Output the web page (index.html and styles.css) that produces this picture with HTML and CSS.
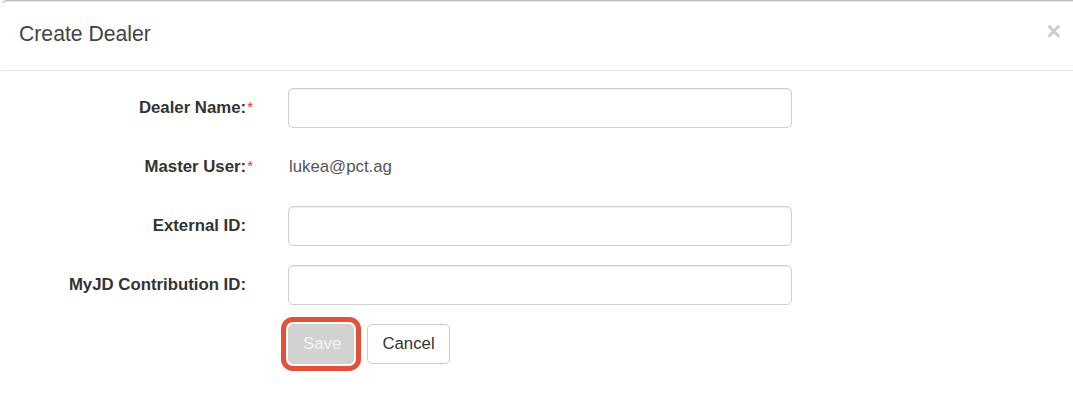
FILE: index.html
```html
<!DOCTYPE html>
<html lang="en">
<head>
<meta charset="utf-8">
<title>Create Dealer</title>
<link rel="stylesheet" href="styles.css">
</head>
<body>
<div class="modal">
  <div class="modal-header">
    <h4 class="modal-title">Create Dealer</h4>
    <button class="close" type="button" aria-label="Close">×</button>
  </div>
  <form class="modal-body">
    <label class="label" for="dealer-name">Dealer Name:<span class="req">*</span></label>
    <input class="control" id="dealer-name" type="text">

    <label class="label">Master User:<span class="req">*</span></label>
    <div class="static">lukea@pct.ag</div>

    <label class="label" for="external-id">External ID:</label>
    <input class="control" id="external-id" type="text">

    <label class="label" for="myjd-id">MyJD Contribution ID:</label>
    <input class="control" id="myjd-id" type="text">

    <div class="spacer"></div>
    <div class="actions">
      <button class="btn btn-save" type="button" disabled>Save</button>
      <button class="btn btn-cancel" type="button">Cancel</button>
    </div>
  </form>
</div>
</body>
</html>
```

FILE: styles.css
```css
html, body {
  margin: 0;
  padding: 0;
  background: #fff;
  overflow: hidden;
}

body {
  font-family: "Liberation Sans", Arial, sans-serif;
  font-size: 16.8px;
  color: #333;
  width: 1073px;
  height: 404px;
}

.modal {
  box-sizing: border-box;
  width: 1073px;
  height: 404px;
  border-top: 1px solid #bdbdbd;
  border-left: 1px solid transparent;
  border-top-left-radius: 7px;
  box-shadow: inset 0 1px 0 #e4e4e4;
  background: #fff;
}

.modal-header {
  box-sizing: border-box;
  height: 70px;
  display: flex;
  align-items: center;
  justify-content: space-between;
  padding: 0 12px 0 18px;
  border-bottom: 1px solid #e5e5e5;
}

.modal-title {
  margin: 0 0 3px 0;
  font-size: 21.2px;
  font-weight: normal;
  color: #444;
  line-height: 1;
}

.close {
  border: 0;
  background: transparent;
  padding: 0;
  margin: 0 0 8px 0;
  font-family: "Liberation Sans", Arial, sans-serif;
  font-size: 25px;
  font-weight: bold;
  line-height: 1;
  color: #000;
  opacity: 0.2;
  cursor: pointer;
}

.modal-body {
  display: grid;
  grid-template-columns: 245px 504px;
  column-gap: 42px;
  row-gap: 19px;
  padding: 17px 0;
  margin: 0;
}

.label {
  display: flex;
  align-items: center;
  justify-content: flex-end;
  height: 40px;
  font-weight: bold;
  color: #333;
  white-space: nowrap;
}

.req {
  color: #e8322c;
  font-weight: normal;
  font-size: 15px;
  margin-right: -7px;
  margin-left: 1px;
  position: relative;
  top: -2px;
}

.control {
  box-sizing: border-box;
  width: 504px;
  height: 40px;
  margin: 0;
  padding: 7px 14px;
  border: 1px solid #cfcfcf;
  border-radius: 5px;
  box-shadow: inset 0 1px 1px rgba(0, 0, 0, 0.075);
  font-family: inherit;
  font-size: 16.8px;
  color: #555;
  background: #fff;
}

.static {
  display: flex;
  align-items: center;
  height: 40px;
  padding-left: 1px;
  color: #555;
}

.actions {
  display: flex;
  gap: 13px;
  align-items: center;
}

.btn {
  box-sizing: border-box;
  height: 40px;
  padding: 0 14px;
  border: 1px solid #ccc;
  border-radius: 5px;
  font-family: inherit;
  font-size: 16.8px;
  line-height: 1;
}

.btn-save {
  width: 66px;
  background: #d2d2d2;
  border-color: #d2d2d2;
  color: #f2f2f2;
  box-shadow: 0 0 0 2px #fff, 0 0 0 7px #e4503a;
}

.btn-cancel {
  width: 83px;
  background: #fff;
  color: #333;
}
```
